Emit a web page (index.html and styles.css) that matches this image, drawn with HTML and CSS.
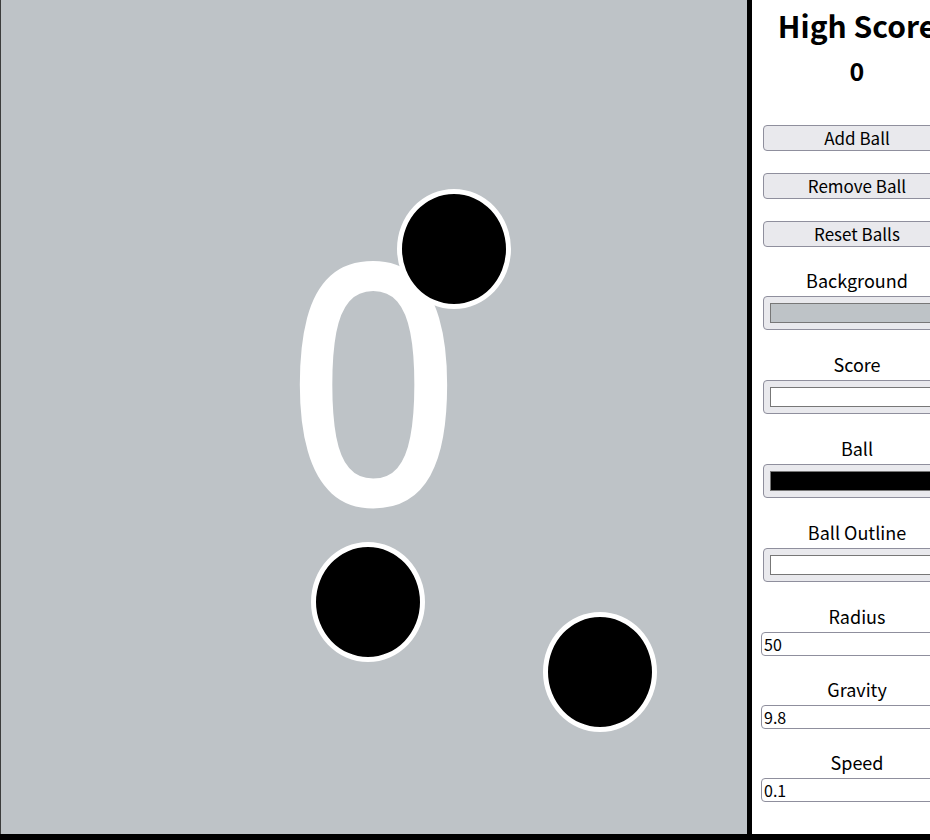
FILE: index.html
```html
<!DOCTYPE html>
<html>
<head>
<meta charset="utf-8">
<title>Balls</title>
<link rel="stylesheet" href="styles.css">
</head>
<body>
<div class="app">
  <div class="game">
    <span class="big-score">0</span>
    <div class="ball" style="left:396px;top:189px"></div>
    <div class="ball" style="left:310px;top:542px"></div>
    <div class="ball" style="left:542px;top:612px"></div>
  </div>
  <div class="panel">
    <h1 class="title">High Score</h1>
    <h2 class="best">0</h2>
    <button class="btn">Add Ball</button>
    <button class="btn">Remove Ball</button>
    <button class="btn">Reset Balls</button>
    <label class="lbl">Background</label>
    <div class="color"><span class="swatch sw-gray"></span></div>
    <label class="lbl">Score</label>
    <div class="color"><span class="swatch sw-white"></span></div>
    <label class="lbl">Ball</label>
    <div class="color"><span class="swatch sw-black"></span></div>
    <label class="lbl">Ball Outline</label>
    <div class="color"><span class="swatch sw-white"></span></div>
    <label class="lbl">Radius</label>
    <input class="num" type="text" value="50">
    <label class="lbl">Gravity</label>
    <input class="num" type="text" value="9.8">
    <label class="lbl">Speed</label>
    <input class="num" type="text" value="0.1">
  </div>
</div>
</body>
</html>
```
FILE: styles.css
```css
html, body {
  margin: 0;
  padding: 0;
  overflow: hidden;
  width: 930px;
  height: 840px;
  background: #000;
}
.app {
  display: flex;
  gap: 5px;
  height: 834px;
  width: 970px;
}
.game {
  position: relative;
  flex: 0 0 746px;
  height: 834px;
  background: #bec3c7;
  border-left: 1px solid #3c3c3c;
  overflow: hidden;
}
.big-score {
  position: absolute;
  left: 285px;
  top: 207px;
  color: #fff;
  font-family: "Noto Sans", "Open Sans", sans-serif;
  font-size: 306px;
  font-weight: 500;
  line-height: 1;
  transform: scaleY(1.1);
  transform-origin: top left;
}
.ball {
  position: absolute;
  width: 114px;
  height: 120px;
  box-sizing: border-box;
  background: #000;
  border: 5px solid #fff;
  border-radius: 50%;
}
.panel {
  flex: 0 0 210px;
  height: 834px;
  background: #fff;
  box-sizing: border-box;
  padding: 0 9px;
  display: flex;
  flex-direction: column;
  font-family: "Noto Sans CJK JP", "Noto Sans", sans-serif;
  text-align: center;
  color: #000;
}
.title {
  margin: 0;
  font-size: 30px;
  line-height: 50px;
  font-weight: bold;
  white-space: nowrap;
}
.best {
  margin: 4px 0 1px;
  font-size: 25px;
  line-height: 32px;
  font-weight: bold;
}
.btn {
  margin: 38px 2px 0;
  height: 26px;
  box-sizing: border-box;
  background: #e9e9ed;
  border: 1px solid #8f8f9d;
  border-radius: 4px;
  font-family: inherit;
  font-size: 17px;
  line-height: 22px;
  padding: 0;
  color: #000;
}
.btn + .btn {
  margin-top: 22px;
}
.lbl {
  margin-top: 22px;
  margin-bottom: 2px;
  display: block;
  font-size: 18px;
  line-height: 22px;
}
.color {
  margin: 3px 2px 0;
  height: 34px;
  box-sizing: border-box;
  background: #e9e9ed;
  border: 1px solid #8f8f9d;
  border-radius: 4px;
  padding: 6px 6px;
  display: flex;
}
.color + .lbl {
  margin-top: 23px;
}
.swatch {
  flex: 1;
  border: 1px solid #777;
}
.sw-gray { background: #bec3c7; }
.sw-white { background: #fff; }
.sw-black { background: #000; }
.num {
  margin-top: 3px;
  height: 24px;
  box-sizing: border-box;
  border: 1px solid #8f8f9d;
  border-radius: 4px;
  background: #fff;
  font-family: inherit;
  font-size: 16px;
  padding: 0 2px;
  color: #000;
  outline: none;
}
.num + .lbl {
  margin-top: 22px;
}
```
